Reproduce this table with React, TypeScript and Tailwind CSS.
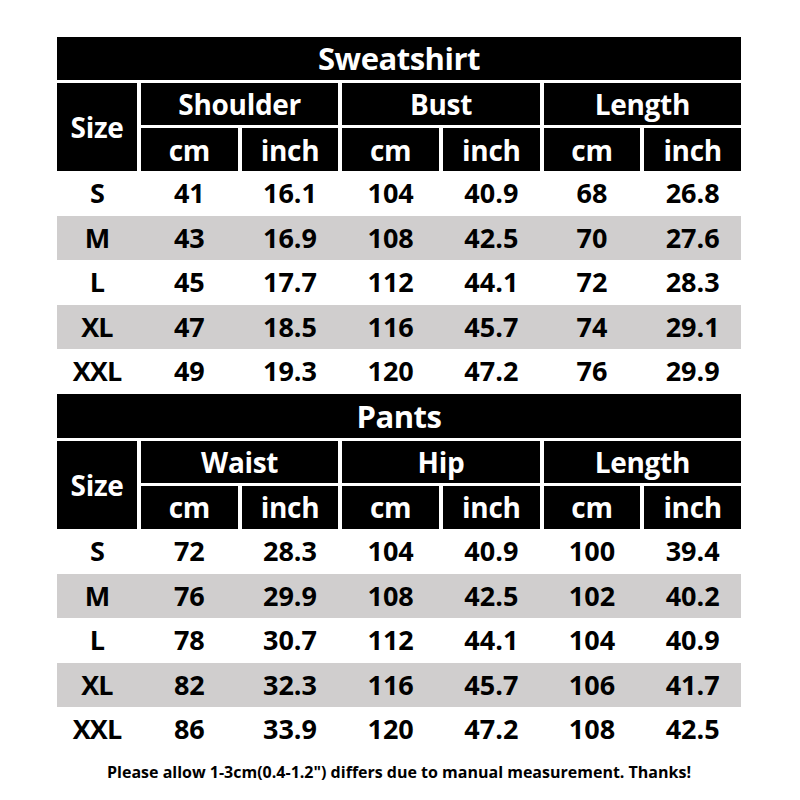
const font = { fontFamily: '"Open Sans", "Lato", sans-serif' };

type Table = {
  title: string;
  groups: string[];
  rows: string[][];
};

const tables: Table[] = [
  {
    title: "Sweatshirt",
    groups: ["Shoulder", "Bust", "Length"],
    rows: [
      ["S", "41", "16.1", "104", "40.9", "68", "26.8"],
      ["M", "43", "16.9", "108", "42.5", "70", "27.6"],
      ["L", "45", "17.7", "112", "44.1", "72", "28.3"],
      ["XL", "47", "18.5", "116", "45.7", "74", "29.1"],
      ["XXL", "49", "19.3", "120", "47.2", "76", "29.9"],
    ],
  },
  {
    title: "Pants",
    groups: ["Waist", "Hip", "Length"],
    rows: [
      ["S", "72", "28.3", "104", "40.9", "100", "39.4"],
      ["M", "76", "29.9", "108", "42.5", "102", "40.2"],
      ["L", "78", "30.7", "112", "44.1", "104", "40.9"],
      ["XL", "82", "32.3", "116", "45.7", "106", "41.7"],
      ["XXL", "86", "33.9", "120", "47.2", "108", "42.5"],
    ],
  },
];

function SizeTable({ table, titleH }: { table: Table; titleH: string }) {
  return (
    <div>
      <div className={`${titleH} bg-black text-white flex items-center justify-center text-[31px] font-bold tracking-[-0.5px]`}>
        {table.title}
      </div>
      <div className="mt-[3px] grid grid-cols-[80px_repeat(6,1fr)] grid-rows-[42px_43px] gap-x-[4px] gap-y-[3px] text-white font-bold text-[28px] tracking-[-0.3px]">
        <div className="row-span-2 bg-black flex items-center justify-center">Size</div>
        {table.groups.map((g) => (
          <div key={g} className="col-span-2 bg-black flex items-center justify-center">
            {g}
          </div>
        ))}
        {table.groups.map((g) => (
          <div key={g + "-units"} className="contents">
            <div className="bg-black flex items-center justify-center">cm</div>
            <div className="bg-black flex items-center justify-center">inch</div>
          </div>
        ))}
      </div>
      <div>
        {table.rows.map((row, i) => (
          <div
            key={row[0]}
            className={`h-[44.6px] grid grid-cols-[80px_repeat(6,1fr)] gap-x-[4px] items-center text-[27px] font-bold text-black ${
              i % 2 === 1 ? "bg-[#d0cece]" : "bg-white"
            }`}
          >
            {row.map((cell, j) => (
              <div key={j} className={j === 0 ? "text-center tracking-[-1px]" : "text-center"}>
                {cell}
              </div>
            ))}
          </div>
        ))}
      </div>
    </div>
  );
}

export default function App() {
  return (
    <div className="w-[800px] h-[800px] bg-white overflow-hidden" style={font}>
      <div className="ml-[57px] w-[684px] pt-[37px]">
        <SizeTable table={tables[0]} titleH="h-[43px]" />
        <SizeTable table={tables[1]} titleH="h-[44px]" />
        <p className="mt-[8px] text-center text-[16px] font-bold text-black">
          Please allow 1-3cm(0.4-1.2") differs due to manual measurement. Thanks!
        </p>
      </div>
    </div>
  );
}
